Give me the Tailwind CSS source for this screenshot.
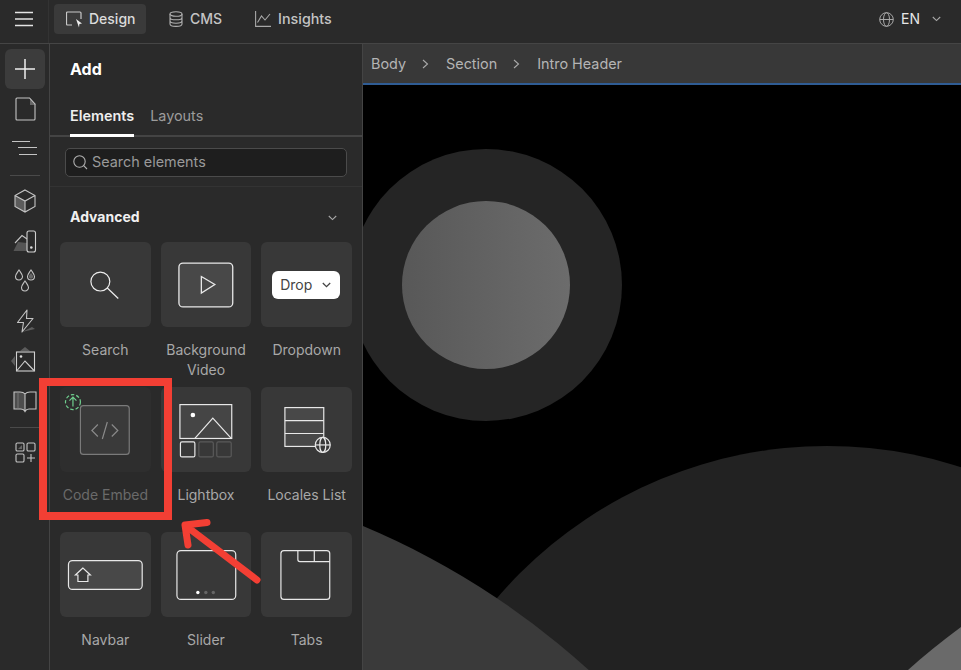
<!doctype html>
<html><head><meta charset="utf-8">
<script src="https://cdn.jsdelivr.net/npm/@tailwindcss/browser@4"></script>
</head>
<body class="bg-[#2a2a2a]">
<div class="relative w-[961px] h-[670px] overflow-hidden flex flex-col bg-[#2a2a2a] font-['Inter','Liberation_Sans',sans-serif] text-sm text-[#c4c4c4]">
  <!-- top bar -->
  <header class="h-[44px] shrink-0 flex items-center border-b border-[#454545] bg-[#2a2a2a]">
    <div class="w-[49px] h-full flex items-center justify-center pb-[6px] border-r border-[#333]">
      <svg width="20" height="16" viewBox="0 0 20 16" fill="none" stroke="#e4e4e4" stroke-width="1.3"><path d="M1 1.500h18M1 8h18M1 14.500h18"/></svg>
    </div>
    <div class="ml-[5px] w-[92px] h-[30px] self-start mt-[4px] rounded bg-[#3a3a3a] flex items-center pl-[12px] gap-[6px] font-medium text-[#dcdcdc]">
      <svg width="17" height="17" viewBox="0 0 17 17" fill="none"><path d="M6 14H1.500a1 1 0 0 1-1-1V2a1 1 0 0 1 1-1H14a1 1 0 0 1 1 1v6" stroke="#c8c8c8" stroke-width="1.2"/><path d="M10 8l6 4.500-2.600.5-.4 3.500z" fill="#eee"/></svg>
      <span>Design</span>
    </div>
    <div class="ml-[23px] flex items-center gap-[7px] mb-[5px] font-medium">
      <svg width="14" height="16" viewBox="0 0 14 16" fill="none" stroke="#b0b0b0" stroke-width="1.1"><ellipse cx="7" cy="3" rx="6" ry="2.300"/><path d="M1 3v10c0 1.300 2.700 2.400 6 2.400s6-1.100 6-2.400V3M1 6.400c0 1.300 2.700 2.400 6 2.400s6-1.100 6-2.400M1 9.800c0 1.300 2.700 2.400 6 2.400s6-1.100 6-2.400"/></svg>
      <span>CMS</span>
    </div>
    <div class="ml-[33px] flex items-center gap-[7px] mb-[5px] font-medium">
      <svg width="16" height="16" viewBox="0 0 16 16" fill="none" stroke="#a8a8a8" stroke-width="1.1"><path d="M.6 0v15.400H16"/><path d="M2.500 11.500 6.500 5l3.500 4 5-6"/></svg>
      <span class="text-[14.3px]">Insights</span>
    </div>
    <div class="ml-auto mr-[20px] mb-[5px] flex items-center">
      <svg width="15" height="15" viewBox="0 0 15 15" fill="none" stroke="#a8a8a8" stroke-width="1"><circle cx="7.500" cy="7.500" r="6.800"/><ellipse cx="7.500" cy="7.500" rx="3" ry="6.800"/><path d="M.7 7.500h13.600"/></svg>
      <span class="ml-[7px] text-[#e6e6e6]">EN</span>
      <svg class="ml-[12px]" width="9" height="6" viewBox="0 0 9 6" fill="none" stroke="#a8a8a8" stroke-width="1.1"><path d="M.8 1l3.700 3.600L8.200 1"/></svg>
    </div>
  </header>

  <div class="flex-1 flex min-h-0">
    <!-- rail -->
    <nav class="w-[50px] shrink-0 border-r border-[#444] flex flex-col items-center pt-[5px]">
      <div class="w-[40px] h-[40px] shrink-0 rounded-md bg-[#3c3c3c] flex items-center justify-center">
        <svg width="22" height="22" viewBox="0 0 22 22" stroke="#eee" stroke-width="1.5"><path d="M11 1v20M1 11h20"/></svg>
      </div>
      <div class="h-[40px] shrink-0 flex items-center justify-center">
        <svg width="30" height="30" viewBox="0 0 30 30" fill="none"><path d="M20 4l6 7h-6z" fill="#666"/><path d="M7 4h12.500L25 10v15a1 1 0 0 1-1 1H7a1 1 0 0 1-1-1V5a1 1 0 0 1 1-1z" stroke="#c4c4c4" stroke-width="1.1"/></svg>
      </div>
      <div class="h-[40px] shrink-0 flex items-center justify-center">
        <svg width="30" height="30" viewBox="0 0 30 30" fill="none" stroke="#c4c4c4" stroke-width="1.1"><path d="M2 7.500h18M8 13.500h19M9 20.500h18"/></svg>
      </div>
      <div class="w-[30px] h-px mt-[6px] mb-[5px] shrink-0 bg-[#4a4a4a]"></div>
      <div class="h-[40px] shrink-0 flex items-center justify-center">
        <svg width="30" height="30" viewBox="0 0 30 30" fill="none"><path d="M5 9.500l10 5.500v11L5 20.500z" fill="#5c5c5c"/><path d="M15 4l10 5.500v11L15 26 5 20.500v-11zM5 9.500 15 15l10-5.500M15 15v11" stroke="#c4c4c4" stroke-width="1.1"/></svg>
      </div>
      <div class="h-[40px] shrink-0 flex items-center justify-center">
        <svg width="30" height="30" viewBox="0 0 30 30" fill="none"><path d="M3.500 25 8 16l9 1v8z" fill="#555"/><path d="M5 17 12 9.500l5 3.500" stroke="#c4c4c4" stroke-width="1.100"/><rect x="17" y="5" width="8.500" height="21" rx="2" stroke="#d0d0d0" stroke-width="1.1" fill="#2a2a2a"/><circle cx="21.300" cy="21.500" r="1.300" fill="#ddd"/></svg>
      </div>
      <div class="h-[40px] shrink-0 flex items-center justify-center">
        <svg width="30" height="30" viewBox="0 0 30 30" fill="none" stroke="#c4c4c4" stroke-width="1.1"><path d="M9 4c2 3 3.500 4.500 3.500 6.500a3.500 3.500 0 0 1-7 0C5.500 8.500 7 7 9 4z"/><path d="M21 4c2 3 3.500 4.500 3.500 6.500a3.500 3.500 0 0 1-7 0c0-2 1.500-3.500 3.500-6.500z"/><path d="M15 15c2 3 3.500 4.500 3.500 6.500a3.500 3.500 0 0 1-7 0c0-2 1.500-3.500 3.500-6.500z"/><path d="M21 7c1.200 1.500 2.200 2.500 2.200 3.500a2.200 2.200 0 0 1-4.400 0c0-1 1-2 2.200-3.500z" fill="#666" stroke="none"/></svg>
      </div>
      <div class="h-[40px] shrink-0 flex items-center justify-center">
        <svg width="30" height="30" viewBox="0 0 30 30" fill="none"><path d="M12 26l10-5 3 2z" fill="#5c5c5c"/><path d="M17 4 7.500 16.500h6L12 26 23 12.500h-6.500l.5-8.500z" stroke="#c4c4c4" stroke-width="1.1" stroke-linejoin="round"/></svg>
      </div>
      <div class="h-[40px] shrink-0 flex items-center justify-center">
        <svg width="38" height="34" viewBox="0 0 38 34" fill="none"><path d="M19 3l5 4H14zM5 17l4-5v10z" fill="#5c5c5c"/><rect x="10.500" y="8" width="18" height="19" fill="#2a2a2a" stroke="#d0d0d0" stroke-width="1.1"/><path d="M11 26.500 19 17l9 9.500" stroke="#d0d0d0" stroke-width="1.1"/><circle cx="15" cy="12.500" r="1.300" fill="#ddd"/></svg>
      </div>
      <div class="h-[40px] shrink-0 flex items-center justify-center">
        <svg width="30" height="30" viewBox="0 0 30 30" fill="none"><path d="M4 6h6l5 2v17l-5-2H4z" fill="#4d4d4d"/><path d="M4 6h6c2.500 0 4 .8 5 2 1-1.200 2.500-2 5-2h6v17h-7c-1.800 0-3 .6-4 2.500-1-1.900-2.200-2.500-4-2.500H4zM15 8v17" stroke="#c4c4c4" stroke-width="1.1"/><path d="M8 6.500v16" stroke="#777" stroke-width="1"/></svg>
      </div>
      <div class="w-[30px] h-px mt-[6px] mb-[5px] shrink-0 bg-[#4a4a4a]"></div>
      <div class="h-[40px] shrink-0 flex items-center justify-center">
        <svg width="30" height="30" viewBox="0 0 30 30" fill="none" stroke="#c4c4c4" stroke-width="1.1"><rect x="6" y="5" width="8" height="8" rx="1.300"/><rect x="17" y="5" width="8" height="8" rx="1.300"/><rect x="6" y="16" width="8" height="8" rx="1.300"/><path d="M21 16v8M17 20h8"/><path d="M8 11l4-4v4z" fill="#666" stroke="none"/></svg>
      </div>
    </nav>

    <!-- panel -->
    <aside class="w-[313px] shrink-0 border-r border-[#444] flex flex-col">
      <h2 class="h-[50px] shrink-0 pl-[20px] flex items-center text-base font-bold text-white">Add</h2>
      <div class="h-[43px] shrink-0 flex items-end pl-[20px] gap-[16px] border-b-2 border-[#444] text-[14.4px]">
        <div class="h-[44px] shrink-0 pt-[13px] font-semibold text-[#eee] border-b-[3px] border-white -mb-[2px]">Elements</div>
        <div class="h-[44px] shrink-0 pt-[13px] -mb-[2px] text-[#9c9c9c]">Layouts</div>
      </div>
      <div class="mx-[15px] mt-[11px] h-[29px] shrink-0 flex items-center pl-[7px] gap-[4px] rounded-[5px] bg-[#1e1e1e] border border-[#4b4b4b] text-[#999] text-[14.4px]">
        <svg width="15" height="15" viewBox="0 0 15 15" fill="none" stroke="#b0b0b0" stroke-width="1.100"><circle cx="6.500" cy="6.500" r="5.700"/><path d="M10.700 10.700 14 14"/></svg>
        <span>Search elements</span>
      </div>
      <div class="mt-[9px] shrink-0 border-t border-[#333] h-[56px] pl-[20px] pr-[25px] pt-[20px] flex justify-between">
        <span class="font-bold text-[#f0f0f0] leading-5">Advanced</span>
        <svg class="mt-[8px]" width="9" height="6" viewBox="0 0 9 6" fill="none" stroke="#a8a8a8" stroke-width="1.100"><path d="M.8 1l3.700 3.600L8.200 1"/></svg>
      </div>
      <div class="grid grid-cols-3 gap-x-[10px] auto-rows-[145px] px-[10px] text-center text-[#a8a8a8] leading-5">
        <div>
          <div class="h-[85px] rounded-md bg-[#383838]">
            <svg class="w-full h-full" viewBox="0 0 91 85" fill="none" stroke="#eee" stroke-width="1.200"><circle cx="40.500" cy="39.500" r="9.500"/><path d="M47.500 46 58.500 56.500"/></svg>
          </div>
          <div class="mt-[13px]">Search</div>
        </div>
        <div>
          <div class="h-[85px] rounded-md bg-[#383838]">
            <svg class="w-full h-full" viewBox="0 0 91 85" fill="none" stroke="#e8e8e8" stroke-width="1.300"><rect x="18" y="21" width="54" height="44" rx="4" fill="#484848"/><path d="M40.500 34.500 54 42.500 40.500 51z"/></svg>
          </div>
          <div class="mt-[13px]">Background<br>Video</div>
        </div>
        <div>
          <div class="h-[85px] rounded-md bg-[#383838] flex items-center justify-center">
            <div class="w-[68px] h-[28px] mr-px rounded-[6px] bg-white flex items-center pl-[8px] text-[#444]">
              <span>Drop</span>
              <svg class="ml-[10px]" width="9" height="6" viewBox="0 0 9 6" fill="none" stroke="#444" stroke-width="1.300"><path d="M.8 1l3.700 3.600L8.200 1"/></svg>
            </div>
          </div>
          <div class="mt-[13px]">Dropdown</div>
        </div>
        <div>
          <div class="h-[85px] rounded-md bg-[#2e2e2e]">
            <svg class="w-full h-full" viewBox="0 0 91 85" fill="none"><rect x="20.500" y="18.500" width="49" height="49" rx="3" fill="#3a3a3a" stroke="#7a7a7a" stroke-width="1.200"/><path d="M38 37.500 32 43.500l6 6M52 37.500l6 6-6 6M47.500 35l-5 17" stroke="#8a8a8a" stroke-width="1.200"/><circle cx="13" cy="15" r="7.500" fill="#2e2e2e" stroke="#6fcf8e" stroke-width="1.200" stroke-dasharray="3.500 2"/><path d="M13 19.500v-9M9.500 13.500 13 10l3.500 3.500" stroke="#6fcf8e" stroke-width="1.200"/></svg>
          </div>
          <div class="mt-[13px] text-[#6a6a6a]">Code Embed</div>
        </div>
        <div>
          <div class="h-[85px] rounded-md bg-[#383838]">
            <svg class="w-full h-full" viewBox="0 0 91 85" fill="none" stroke="#e8e8e8" stroke-width="1.200"><rect x="19" y="17.500" width="52" height="34" fill="#454545"/><path d="M34 51.500 52 31l18.500 20.500"/><circle cx="32" cy="28" r="2.300" fill="#fff" stroke="none"/><rect x="19.500" y="55" width="14.500" height="15" rx="1.500"/><rect x="38" y="55" width="14.500" height="15" rx="1.500" stroke="#5a5a5a"/><rect x="56" y="55" width="14.500" height="15" rx="1.500" stroke="#5a5a5a"/></svg>
          </div>
          <div class="mt-[13px]">Lightbox</div>
        </div>
        <div>
          <div class="h-[85px] rounded-md bg-[#383838]">
            <svg class="w-full h-full" viewBox="0 0 91 85" fill="none" stroke="#e8e8e8" stroke-width="1.200"><rect x="24" y="20.500" width="39" height="39" fill="#484848"/><path d="M24 33.500h39M24 46.500h39"/><circle cx="62" cy="58" r="7.500" fill="#383838"/><ellipse cx="62" cy="58" rx="3" ry="7.500"/><path d="M54.500 58h15"/></svg>
          </div>
          <div class="mt-[13px]">Locales List</div>
        </div>
        <div>
          <div class="h-[85px] rounded-md bg-[#383838]">
            <svg class="w-full h-full" viewBox="0 0 91 85" fill="none" stroke="#e8e8e8" stroke-width="1.200"><rect x="8.500" y="28.500" width="74" height="29" rx="4" fill="#484848"/><path d="M23 36l-7.500 7H18v6.500h10V43h2.500z" fill="#383838"/></svg>
          </div>
          <div class="mt-[13px]">Navbar</div>
        </div>
        <div>
          <div class="h-[85px] rounded-md bg-[#383838]">
            <svg class="w-full h-full" viewBox="0 0 91 85" fill="none" stroke="#e8e8e8" stroke-width="1.200"><rect x="16" y="18.500" width="59" height="49" rx="4"/><circle cx="37" cy="60.500" r="1.700" fill="#fff" stroke="none"/><circle cx="45" cy="60.500" r="1.700" fill="#666" stroke="none"/><circle cx="52.500" cy="60.500" r="1.700" fill="#666" stroke="none"/></svg>
          </div>
          <div class="mt-[13px]">Slider</div>
        </div>
        <div>
          <div class="h-[85px] rounded-md bg-[#383838]">
            <svg class="w-full h-full" viewBox="0 0 91 85" fill="none" stroke="#e8e8e8" stroke-width="1.200"><rect x="20" y="18.500" width="49" height="49" rx="3"/><path d="M37 18.500v9a2 2 0 0 0 2 2h30M53.500 18.500v11"/></svg>
          </div>
          <div class="mt-[13px]">Tabs</div>
        </div>
      </div>
    </aside>

    <!-- canvas -->
    <main class="flex-1 min-w-0 flex flex-col">
      <div class="h-[39px] shrink-0 bg-[#383838] flex items-center pl-[8px] pt-px text-[#b4b4b4] text-[14.4px]">
        <span>Body</span>
        <svg class="ml-[16px] mr-[17px]" width="7" height="10" viewBox="0 0 7 10" fill="none" stroke="#aaa" stroke-width="1.100"><path d="M1 1l4.500 4L1 9"/></svg>
        <span>Section</span>
        <svg class="ml-[16px] mr-[17px]" width="7" height="10" viewBox="0 0 7 10" fill="none" stroke="#aaa" stroke-width="1.100"><path d="M1 1l4.500 4L1 9"/></svg>
        <span>Intro Header</span>
      </div>
      <div class="h-[2px] shrink-0 bg-[#2f5c94]"></div>
      <svg class="flex-1 block w-full bg-black" width="598" height="585" viewBox="363 85 598 585">
        <defs><linearGradient id="sun" x1="0" x2="1" y1="0" y2="0"><stop offset="0" stop-color="#585858"/><stop offset="1" stop-color="#6c6c6c"/></linearGradient></defs>
        <circle cx="486" cy="285" r="136" fill="#252525"/>
        <circle cx="486" cy="285" r="84" fill="url(#sun)"/>
        <circle cx="827" cy="880" r="434" fill="#222"/>
        <circle cx="59" cy="1252" r="787" fill="#3a3a3a"/>
        <path d="M961 627Q930 650 908 670H961z" fill="#6a6a6a"/>
      </svg>
    </main>
  </div>

  <!-- annotation overlay -->
  <div class="absolute left-[39px] top-[378px] w-[133px] h-[142px] border-[8px] border-[#f33f34]"></div>
  <svg class="absolute left-[170px] top-[510px]" width="100" height="80" viewBox="170 510 100 80" fill="none" stroke="#f33f34" stroke-width="7" stroke-linecap="round" stroke-linejoin="round"><path d="M257 580 186 526M207 522.500l-22 2.500 3 20"/></svg>
</div>
</body></html>
